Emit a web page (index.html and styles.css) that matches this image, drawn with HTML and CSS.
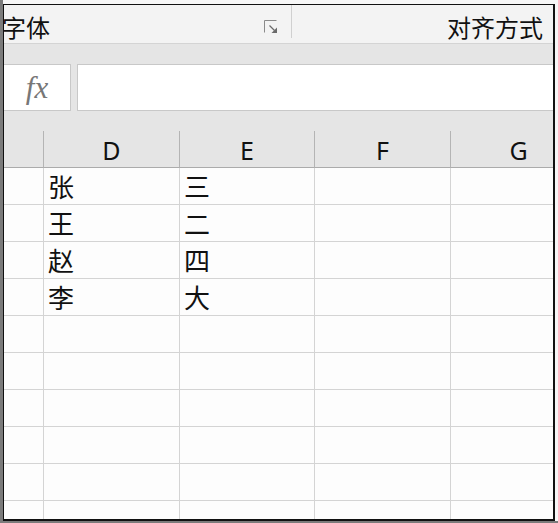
FILE: index.html
```html
<!DOCTYPE html>
<html lang="zh-CN">
<head>
    <meta charset="UTF-8">
    <title>工作表</title>
    <link rel="stylesheet" href="styles.css">
</head>
<body>
    <div class="screen">
        <div class="window">
            <!-- 功能区：字体 / 对齐方式 -->
            <div class="ribbon">
                <div class="group group-font">
                    <span class="group-label">字体</span>
                    <svg class="launcher" width="14" height="14" viewBox="0 0 14 14">
                        <path d="M0.5 12.5 V0.5 H12.5" fill="none" stroke="#8a8a8a" stroke-width="1"/>
                        <path d="M5.5 5.5 L10.5 10.5" stroke="#6a6a6a" stroke-width="1.3"/>
                        <path d="M13 7.5 V13 H7.5 Z" fill="#6a6a6a"/>
                    </svg>
                </div>
                <div class="group group-align">
                    <span class="group-label">对齐方式</span>
                </div>
            </div>

            <!-- 编辑栏 -->
            <div class="formula-bar">
                <div class="fx-box">fx</div>
                <div class="formula-input"></div>
            </div>

            <!-- 表格 -->
            <div class="sheet">
                <div class="col-head corner"></div>
                <div class="col-head">D</div>
                <div class="col-head">E</div>
                <div class="col-head">F</div>
                <div class="col-head">G</div>

                <div class="row-head"></div><div class="cell">张</div><div class="cell">三</div><div class="cell"></div><div class="cell"></div>
                <div class="row-head"></div><div class="cell">王</div><div class="cell">二</div><div class="cell"></div><div class="cell"></div>
                <div class="row-head"></div><div class="cell">赵</div><div class="cell">四</div><div class="cell"></div><div class="cell"></div>
                <div class="row-head"></div><div class="cell">李</div><div class="cell">大</div><div class="cell"></div><div class="cell"></div>
                <div class="row-head"></div><div class="cell"></div><div class="cell"></div><div class="cell"></div><div class="cell"></div>
                <div class="row-head"></div><div class="cell"></div><div class="cell"></div><div class="cell"></div><div class="cell"></div>
                <div class="row-head"></div><div class="cell"></div><div class="cell"></div><div class="cell"></div><div class="cell"></div>
                <div class="row-head"></div><div class="cell"></div><div class="cell"></div><div class="cell"></div><div class="cell"></div>
                <div class="row-head"></div><div class="cell"></div><div class="cell"></div><div class="cell"></div><div class="cell"></div>
                <div class="row-head"></div><div class="cell"></div><div class="cell"></div><div class="cell"></div><div class="cell"></div>
            </div>
        </div>
    </div>
</body>
</html>
```

FILE: styles.css
```css
body {
    margin: 0;
    font-family: "Noto Sans CJK SC", "Noto Sans", sans-serif;
    color: #111;
}
.screen {
    width: 558px;
    height: 523px;
    box-sizing: border-box;
    border-left: 3px solid #7b7b7b;
    border-bottom: 2px solid #7b7b7b;
    padding-top: 4px;
    padding-right: 3px;
    background-color: #f7f7f7;
}
.window {
    height: 100%;
    box-sizing: border-box;
    border: 2px solid #111;
    border-top-width: 1px;
    border-left-width: 1px;
    background-color: #fff;
    overflow: hidden;
}
.ribbon {
    display: flex;
    height: 39px;
    box-sizing: border-box;
    border-bottom: 1px solid #d4d4d4;
    background-color: #f3f3f3;
}
.group {
    display: flex;
    align-items: center;
    height: 33px;
}
.group-label {
    font-size: 24px;
    line-height: 1;
    margin-top: 11px;
}
.group-font {
    width: 287px;
    border-right: 1px solid #d0d0d0;
}
.group-font .group-label {
    margin-left: -2px;
}
.launcher {
    margin-left: auto;
    margin-right: 13px;
    margin-top: 10px;
}
.group-align {
    flex: 1;
    justify-content: flex-end;
    padding-right: 10px;
}
.formula-bar {
    display: flex;
    gap: 6px;
    padding-top: 20px;
    background-color: #e5e5e5;
}
.fx-box,
.formula-input {
    height: 47px;
    box-sizing: border-box;
    border: 1px solid #c8c8c8;
    background-color: #fff;
}
.fx-box {
    width: 68px;
    margin-left: -1px;
    display: flex;
    align-items: center;
    justify-content: center;
    font-family: "Liberation Serif", serif;
    font-style: italic;
    font-size: 31px;
    color: #777;
}
.formula-input {
    flex: 1;
    margin-right: -2px;
}
.sheet {
    display: grid;
    grid-template-columns: 40px 136px 135px 136px 136px;
    grid-auto-rows: 37px;
    padding-top: 20px;
    background: linear-gradient(#e5e5e5, #e5e5e5) top / 100% 57px no-repeat;
}
.col-head {
    height: 37px;
    box-sizing: border-box;
    border-right: 1px solid #b4b4b4;
    border-bottom: 1px solid #ababab;
    text-align: center;
    font-family: "Noto Sans", sans-serif;
    font-size: 25px;
    line-height: 38px;
    color: #111;
}
.row-head,
.cell {
    box-sizing: border-box;
    border-right: 1px solid #d4d4d4;
    border-bottom: 1px solid #d4d4d4;
    background-color: #fdfdfd;
}
.cell {
    padding-left: 4px;
    font-size: 26px;
    line-height: 36px;
}
```
